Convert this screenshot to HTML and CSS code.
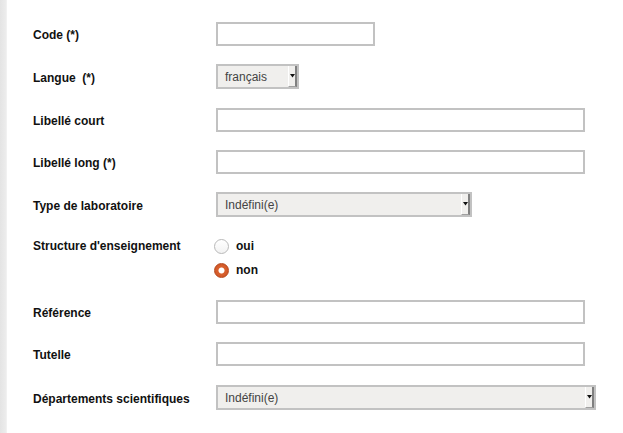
FILE: index.html
```html
<!DOCTYPE html>
<html lang="fr">
<head>
<meta charset="utf-8">
<title>Formulaire</title>
<link rel="stylesheet" href="styles.css">
</head>
<body>
<div class="page">
  <div class="strip"></div>
  <form class="form">
    <div class="row">
      <label class="label">Code (*)</label>
      <input class="field w-code" type="text">
    </div>
    <div class="row row-sel">
      <label class="label">Langue&nbsp; (*)</label>
      <span class="select w-lang"><span class="select-text">français</span><span class="arrow"><svg width="5" height="4" viewBox="0 0 5 4"><path d="M0 0H5L2.5 3.5Z" fill="#111"/></svg></span></span>
    </div>
    <div class="row">
      <label class="label">Libellé court</label>
      <input class="field w-long" type="text">
    </div>
    <div class="row">
      <label class="label">Libellé long (*)</label>
      <input class="field w-long" type="text">
    </div>
    <div class="row row-sel-last">
      <label class="label">Type de laboratoire</label>
      <span class="select w-type"><span class="select-text">Indéfini(e)</span><span class="arrow"><svg width="5" height="4" viewBox="0 0 5 4"><path d="M0 0H5L2.5 3.5Z" fill="#111"/></svg></span></span>
    </div>
    <div class="row row-radio">
      <label class="label label-top">Structure d'enseignement</label>
      <div class="radios">
        <div class="radio-line"><span class="radio"></span><span class="radio-text">oui</span></div>
        <div class="radio-line"><span class="radio checked"></span><span class="radio-text">non</span></div>
      </div>
    </div>
    <div class="row">
      <label class="label">Référence</label>
      <input class="field w-long" type="text">
    </div>
    <div class="row row-plus">
      <label class="label">Tutelle</label>
      <input class="field w-long" type="text">
    </div>
    <div class="row">
      <label class="label">Départements scientifiques</label>
      <span class="select w-dep"><span class="select-text">Indéfini(e)</span><span class="arrow"><svg width="5" height="4" viewBox="0 0 5 4"><path d="M0 0H5L2.5 3.5Z" fill="#111"/></svg></span></span>
    </div>
  </form>
</div>
</body>
</html>
```
FILE: styles.css
```css
* { box-sizing: border-box; }
html, body { margin: 0; padding: 0; background: #fff; }
body {
  font-family: "Liberation Sans", Arial, sans-serif;
  font-size: 12px;
  color: #111;
  width: 623px;
  height: 433px;
  overflow: hidden;
}
.page { display: flex; height: 433px; }
.strip {
  width: 7px;
  flex-shrink: 0;
  background: linear-gradient(to right, #e4e4e4, #ececec 80%, #f4f4f4);
}
.form {
  display: flex;
  flex-direction: column;
  padding: 22px 0 0 26px;
}
.row {
  display: flex;
  align-items: center;
  margin-bottom: 18px;
}
.row-sel { margin-bottom: 19px; }
.row-sel-last { margin-bottom: 17px; }
.row-plus { margin-bottom: 19px; }
.row-radio { align-items: flex-start; }
.label {
  width: 183px;
  flex-shrink: 0;
  font-weight: bold;
  padding-top: 2px;
}
.label-top { line-height: 24px; padding-top: 0; }
.field {
  height: 24px;
  border: 2px solid #c2c2c2;
  background: #fff;
  margin: 0;
  padding: 0 4px;
  font: inherit;
  outline: none;
}
.w-code { width: 159px; }
.w-long { width: 369px; }
.select {
  position: relative;
  display: flex;
  align-items: center;
  height: 25px;
  border: 2px solid #c2c2c2;
  background: #f0efed;
  color: #444;
  padding-left: 7px;
}
.select-text { font-size: 12px; }
.w-lang { width: 83px; }
.w-type { width: 256px; }
.w-dep { width: 380px; }
.arrow {
  position: absolute;
  top: 0;
  right: 0;
  bottom: 0;
  width: 9px;
  border-left: 1px solid #fff;
  border-right: 2px solid #808080;
  border-bottom: 1px solid #a0a0a0;
  display: flex;
  align-items: center;
  justify-content: center;
}
.arrow svg { display: block; margin-top: -1px; }
.radios { display: flex; flex-direction: column; margin-left: -2px; }
.radio-line {
  display: flex;
  align-items: center;
  height: 24px;
}
.radio {
  width: 15px;
  height: 15px;
  border-radius: 50%;
  border: 1px solid #b9b9b9;
  background: linear-gradient(#ffffff, #f2f2f2);
  margin-right: 7px;
  flex-shrink: 0;
}
.radio.checked {
  border: 1px solid #b5471c;
  background: radial-gradient(circle, #fff 0, #fff 2.6px, #d9622f 3.4px, #d25828 70%, #c44e20 100%);
}
.radio-text { font-weight: bold; }
```
